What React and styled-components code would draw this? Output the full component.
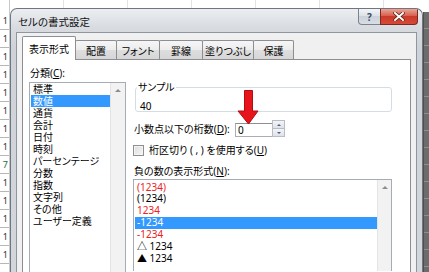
import React from "react";
import styled, { createGlobalStyle } from "styled-components";

const GlobalStyle = createGlobalStyle`
  html, body { margin: 0; padding: 0; overflow: hidden; }
  body {
    width: 429px;
    height: 272px;
    background: #fff;
    font-family: "Noto Sans", "Noto Sans CJK JP", sans-serif;
    font-size: 10px;
    font-feature-settings: "palt";
    color: #000;
  }
`;

const Screen = styled.div`
  position: relative;
  display: flex;
  align-items: flex-start;
  width: 429px;
  height: 272px;
  background: #fff repeating-linear-gradient(90deg, transparent 0 63px, #e4e4e4 63px 64px);
`;

const RowHeaders = styled.div`
  width: 10px;
  height: 272px;
  overflow: hidden;
  flex: none;
  display: flex;
  flex-direction: column;
  padding-top: 12px;
  border-right: 1px solid #c9c9c9;
  box-sizing: border-box;
`;

const RowNum = styled.div`
  height: 17px;
  flex: none;
  border-bottom: 1px solid #b7b7b7;
  font-size: 9px;
  line-height: 17px;
  text-align: right;
  color: ${p => (p.$active ? "#1d6b3a" : "#333")};
  padding-right: 1px;
`;

const Window = styled.div`
  width: 413px;
  height: 264px;
  overflow: hidden;
  flex: none;
  margin-top: 8px;
  box-sizing: border-box;
  display: flex;
  flex-direction: column;
  border: 1px solid #6f7680;
  border-bottom: none;
  border-radius: 7px 7px 0 0;
  padding: 0 5px;
  background: linear-gradient(#eceef1, #d8dce1 18px, #cfd3d9 40px, #d3d7dc);
`;

const TitleBar = styled.div`
  height: 23px;
  flex: none;
  display: flex;
  align-items: flex-start;
`;

const Title = styled.div`
  align-self: center;
  margin: 3px 0 0 2px;
  font-size: 10.5px;
  line-height: 12px;
  color: #111;
`;

const Buttons = styled.div`
  margin-left: auto;
  margin-right: -1px;
  display: flex;
`;

const CapButton = styled.div`
  width: ${p => p.$w}px;
  height: 16px;
  box-sizing: border-box;
  display: flex;
  align-items: center;
  justify-content: center;
  border: 1px solid ${p => (p.$close ? "#7a2a22" : "#7c838c")};
  border-top: none;
  border-radius: ${p => (p.$close ? "0 0 4px 0" : "0 0 0 4px")};
  margin-left: ${p => (p.$close ? "-1px" : "0")};
  background: ${p =>
    p.$close
      ? "linear-gradient(#eba596, #d9604f 45%, #c93a28 50%, #d84a36)"
      : "linear-gradient(#f3f5f8, #dde2e8 45%, #cbd2da 50%, #d8dee5)"};
  color: #3a4a66;
  font-size: 10px;
  font-weight: bold;
`;

const Client = styled.div`
  flex: 1;
  min-height: 0;
  display: flex;
  flex-direction: column;
  background: #f0f0f0;
  border: 1px solid #8e96a0;
  border-bottom: none;
  padding: 3px 5px 0 5px;
`;

const TabRow = styled.div`
  display: flex;
  flex: none;
  align-items: flex-end;
  height: 23px;
  position: relative;
  z-index: 1;
`;

const Tab = styled.div`
  width: ${p => p.$w}px;
  height: ${p => (p.$active ? 24 : 19)}px;
  margin-bottom: ${p => (p.$active ? -1 : 0)}px;
  margin-left: ${p => (p.$first ? 0 : -1)}px;
  box-sizing: border-box;
  display: flex;
  align-items: center;
  justify-content: center;
  border: 1px solid #8c8e94;
  border-bottom: none;
  border-radius: 2px 2px 0 0;
  background: ${p =>
    p.$active ? "#fff" : "linear-gradient(#f6f6f6, #ececec 50%, #dedede 50%, #d6d6d6)"};
  position: relative;
  z-index: ${p => (p.$active ? 2 : 1)};
  font-size: 10px;
  line-height: 12px;
  padding-top: 1px;
`;

const Panel = styled.div`
  flex: 1;
  min-height: 0;
  overflow: hidden;
  background: #fff;
  border: 1px solid #8c8e94;
  border-bottom: none;
  display: grid;
  grid-template-columns: 97px 259px;
  align-items: start;
  column-gap: 7px;
  padding: 7px 0 0 6px;
`;

const Column = styled.div`
  display: flex;
  flex-direction: column;
  margin-top: ${p => p.$top || 0}px;
`;

const Label = styled.div`
  font-size: 10px;
  line-height: 12px;
  height: 12px;
  margin-left: 1px;
  margin-top: ${p => p.$mt || 0}px;
  width: ${p => (p.$w ? `${p.$w}px` : "auto")};
  flex: none;
  white-space: nowrap;
`;

const Key = styled.span`
  text-decoration: underline;
  text-underline-offset: 1px;
`;

const ListBox = styled.div`
  margin-top: ${p => p.$mt || 0}px;
  height: ${p => p.$h}px;
  overflow: hidden;
  border: 1px solid #a5acb5;
  border-bottom: none;
  display: flex;
  box-sizing: border-box;
`;

const Items = styled.div`
  flex: 1;
  padding-top: ${p => p.$pt || 0}px;
`;

const Item = styled.div`
  height: ${p => p.$lh || 12}px;
  line-height: ${p => p.$lh || 12}px;
  margin-left: 1px;
  padding-left: ${p => p.$pl || 2}px;
  white-space: nowrap;
  background: ${p => (p.$selected ? "#3399ff" : "transparent")};
  color: ${p => (p.$selected ? "#fff" : p.$red ? "#f0201c" : "#000")};
  font-size: 10px;
`;

const ScrollBar = styled.div`
  width: ${p => p.$w}px;
  flex: none;
  background: #f2f2f2;
  border-left: 1px solid #e4e4e4;
  display: flex;
  justify-content: center;
  padding-top: 6px;
  box-sizing: border-box;
`;

const UpArrow = styled.div`
  width: 0;
  height: 0;
  border-left: 3px solid transparent;
  border-right: 3px solid transparent;
  border-bottom: 3px solid #8c8c8c;
`;

const Group = styled.fieldset`
  margin: 0 0 0 2px;
  padding: 6px 0 3px 4px;
  border: 1px solid #d3dde5;
  border-radius: 3px;
  height: 20px;
  box-sizing: content-box;
  width: 251px;
`;

const Legend = styled.legend`
  padding: 0 1px;
  margin-left: -3px;
  font-size: 10px;
  line-height: 12px;
`;

const Sample = styled.div`
  font-size: 10px;
  line-height: 12px;
  margin-top: 1px;
`;

const Row = styled.div`
  display: flex;
  align-items: center;
  margin-top: ${p => p.$mt || 0}px;
  height: ${p => p.$h}px;
`;

const Spin = styled.div`
  display: flex;
  align-items: flex-end;
  height: 17px;
`;

const Edit = styled.div`
  width: 37px;
  height: 14px;
  box-sizing: border-box;
  border: 1px solid #abadb3;
  border-top-color: #8c8f96;
  border-right: none;
  padding-left: 2px;
  font-size: 10px;
  line-height: 12px;
  background: #fff;
`;

const SpinButtons = styled.div`
  width: 13px;
  height: 17px;
  display: flex;
  flex-direction: column;
`;

const SpinBtn = styled.div`
  flex: 1;
  border: 1px solid #b8bcc4;
  margin-top: ${p => (p.$down ? -1 : 0)}px;
  background: linear-gradient(#f4f5f7, #dfe2e7);
  display: flex;
  align-items: center;
  justify-content: center;
  &::after {
    content: "";
    border-left: 2.5px solid transparent;
    border-right: 2.5px solid transparent;
    ${p =>
      p.$down ? "border-top: 2.5px solid #4b5e85;" : "border-bottom: 2.5px solid #4b5e85;"}
  }
`;

const Check = styled.div`
  width: 9px;
  height: 9px;
  border: 1px solid #8f8f8f;
  background: linear-gradient(135deg, #dcdcdc, #f7f7f7);
  box-shadow: inset 0 0 0 1px #f4f4f4;
  margin-right: 4px;
  flex: none;
`;

const Shadow = styled.div`
  flex: 1;
  align-self: stretch;
  margin-top: 12px;
  background: repeating-linear-gradient(#6c6c6c 0 16px, #8e8e8e 16px 17px);
  border-left: 1px solid #4f4f4f;
`;

const Arrow = styled.svg`
  position: absolute;
  left: 237px;
  top: 90px;
`;

const categories = [
  "標準", "数値", "通貨", "会計", "日付", "時刻", "パーセンテージ",
  "分数", "指数", "文字列", "その他", "ユーザー定義",
];

const negatives = [
  { t: "(1234)", red: true },
  { t: "(1234)" },
  { t: "1234", red: true },
  { t: "-1234", selected: true },
  { t: "-1234", red: true },
  { t: "△ 1234" },
  { t: "▲ 1234" },
];

const tabs = [
  { t: "表示形式", w: 54 },
  { t: "配置", w: 42 },
  { t: "フォント", w: 44 },
  { t: "罫線", w: 44 },
  { t: "塗りつぶし", w: 52 },
  { t: "保護", w: 41 },
];

const rows = ["1", "1", "1", "1", "1", "1", "1", "1", "7", "1", "1", "1", "1", "1"];

export default function App() {
  return (
    <Screen>
      <GlobalStyle />
      <RowHeaders>
        {rows.map((r, i) => (
          <RowNum key={i} $active={i === 8}>{r}</RowNum>
        ))}
      </RowHeaders>

      <Window>
        <TitleBar>
          <Title>セルの書式設定</Title>
          <Buttons>
            <CapButton $w={23}>?</CapButton>
            <CapButton $w={38} $close>
              <svg width="12" height="9" viewBox="0 0 12 9">
                <path d="M2 1 L10 8 M10 1 L2 8" stroke="#5a1c14" strokeWidth="3.4" strokeLinecap="square" />
                <path d="M2 1 L10 8 M10 1 L2 8" stroke="#fff" strokeWidth="2" strokeLinecap="square" />
              </svg>
            </CapButton>
          </Buttons>
        </TitleBar>

        <Client>
          <TabRow>
            {tabs.map((tab, i) => (
              <Tab key={tab.t} $w={tab.w} $active={i === 0} $first={i === 0}>
                {tab.t}
              </Tab>
            ))}
          </TabRow>

          <Panel>
            <Column>
              <Label>
                分類(<Key>C</Key>):
              </Label>
              <ListBox $mt={3} $h={190}>
                <Items>
                  {categories.map((c, i) => (
                    <Item key={c} $selected={i === 1}>{c}</Item>
                  ))}
                </Items>
                <ScrollBar $w={15}>
                  <UpArrow />
                </ScrollBar>
              </ListBox>
            </Column>

            <Column $top={14}>
              <Group>
                <Legend>サンプル</Legend>
                <Sample>40</Sample>
              </Group>

              <Row $mt={8} $h={17}>
                <Label $w={101}>
                  小数点以下の桁数(<Key>D</Key>):
                </Label>
                <Spin>
                  <Edit>0</Edit>
                  <SpinButtons>
                    <SpinBtn />
                    <SpinBtn $down />
                  </SpinButtons>
                </Spin>
              </Row>

              <Row $mt={7} $h={12}>
                <Check />
                <Label>
                  桁区切り ( , ) を使用する(<Key>U</Key>)
                </Label>
              </Row>

              <Label $mt={9}>
                負の数の表示形式(<Key>N</Key>):
              </Label>
              <ListBox $mt={2} $h={92}>
                <Items $pt={1.5}>
                  {negatives.map((n, i) => (
                    <Item key={i} $lh={11.85} $red={n.red} $selected={n.selected} $pl={2}>
                      {n.t}
                    </Item>
                  ))}
                </Items>
                <ScrollBar $w={14}>
                  <UpArrow />
                </ScrollBar>
              </ListBox>
            </Column>
          </Panel>
        </Client>
      </Window>

      <Shadow />

      <Arrow width="22" height="35" viewBox="0 0 22 35">
        <path d="M7.5 0.5 H15.5 V21 H21 L11.5 34 L1 21 H7.5 Z" fill="#e8141c" stroke="#b30d12" strokeWidth="1" />
      </Arrow>
    </Screen>
  );
}
